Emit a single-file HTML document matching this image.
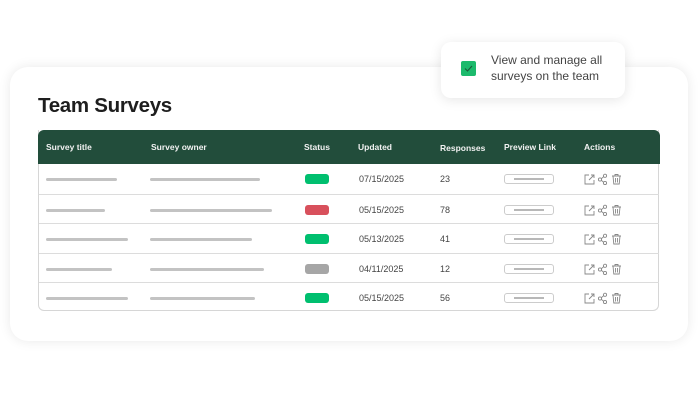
<!DOCTYPE html>
<html><head><style>
body{margin:0;width:699px;height:400px;background:#fff;position:relative;overflow:hidden;font-family:"Liberation Sans",sans-serif;}
.card{position:absolute;left:10px;top:67px;width:678px;height:274px;background:#fff;border-radius:18px;box-shadow:0 0 12px rgba(0,0,0,.09);}
h1{position:absolute;left:38px;top:94px;margin:0;font-size:20.5px;font-weight:bold;color:#1e1e1e;letter-spacing:-.3px}
.tbl{position:absolute;left:38px;top:130px;width:621px;height:181px;border:1px solid #d6d6d6;border-top:none;border-radius:0 0 6px 6px;box-sizing:border-box;}
.hd{position:absolute;left:38px;top:130px;width:622px;height:34px;background:#224d3b;border-radius:6px 6px 0 0;color:#f2f2f2;font-size:8.5px;font-weight:bold}
.hd span{position:absolute;top:12px}
.row{position:absolute;left:39px;width:620px;height:29px;border-top:1px solid #dcdcdc;font-size:9px;color:#444}
.bar{position:absolute;top:14px;height:3px;background:#c3c3c3;border-radius:2px}
.pill{position:absolute;left:266px;top:10px;width:24px;height:10px;border-radius:3px}
.pv{position:absolute;left:465px;top:10px;width:50px;height:10px;border:1px solid #ccc;border-radius:3px;box-sizing:border-box}
.pv:after{content:"";position:absolute;left:9px;top:3px;width:30px;height:2px;background:#b8b8b8}
.txt{position:absolute;top:10px}
.ic{position:absolute;left:545px;top:9px}
.tip{position:absolute;left:441px;top:42px;width:184px;height:56px;background:#fff;border-radius:10px;box-shadow:0 2px 12px rgba(0,0,0,.1)}
.cb{position:absolute;left:20px;top:19px;width:15px;height:15px;background:#1cba6c;border-radius:2px}
.tip p{position:absolute;left:50px;top:10px;margin:0;font-size:12px;line-height:16px;color:#444}
</style></head><body>
<div class="card"></div>
<h1>Team Surveys</h1>
<div class="tbl"></div>
<div class="hd"><span style="left:8px">Survey title</span><span style="left:113px">Survey owner</span><span style="left:266px">Status</span><span style="left:320px">Updated</span><span style="left:402px;top:13px">Responses</span><span style="left:466px">Preview Link</span><span style="left:546px">Actions</span></div>
<div id="rows"></div>
<script>
var d=[[71,110,'#00bf6f','07/15/2025','23'],[59,122,'#d8505c','05/15/2025','78'],[82,102,'#00bf6f','05/13/2025','41'],[66,114,'#a6a6a6','04/11/2025','12'],[82,105,'#00bf6f','05/15/2025','56']];
var ic='<svg class="ic" width="40" height="12" viewBox="0 0 40 12" fill="none" stroke="#888" stroke-width="0.9"><path d="M5 2H1v9h9V7M5 7l5-5M7 2h3v3"/><circle cx="16" cy="6.5" r="1.6"/><circle cx="21" cy="2.8" r="1.6"/><circle cx="21" cy="10" r="1.6"/><path d="M17.4 5.7l2.2-2M17.4 7.3l2.2 2"/><path d="M28 3h9M31 3V1.5h3V3M29 3l.8 8h5.4l.8-8M31.5 5v4.5M33.5 5v4.5"/></svg>';
var h='';
d.forEach(function(r,i){var t=164+i*29.5;
h+='<div class="row" style="top:'+t+'px'+(i==0?';border-top:none':'')+'"><div class="bar" style="left:7px;width:'+r[0]+'px"></div><div class="bar" style="left:111px;width:'+r[1]+'px"></div><div class="pill" style="background:'+r[2]+'"></div><span class="txt" style="left:320px">'+r[3]+'</span><span class="txt" style="left:401px">'+r[4]+'</span><div class="pv"></div>'+ic+'</div>';});
document.getElementById('rows').innerHTML=h;
</script>
<div class="tip"><div class="cb"><svg width="15" height="15" viewBox="0 0 15 15"><path d="M4 7.5l2.5 2.5 4.5-5" stroke="#1a5a3a" stroke-width="1.1" fill="none"/></svg></div><p>View and manage all<br>surveys on the team</p></div>
</body></html>
